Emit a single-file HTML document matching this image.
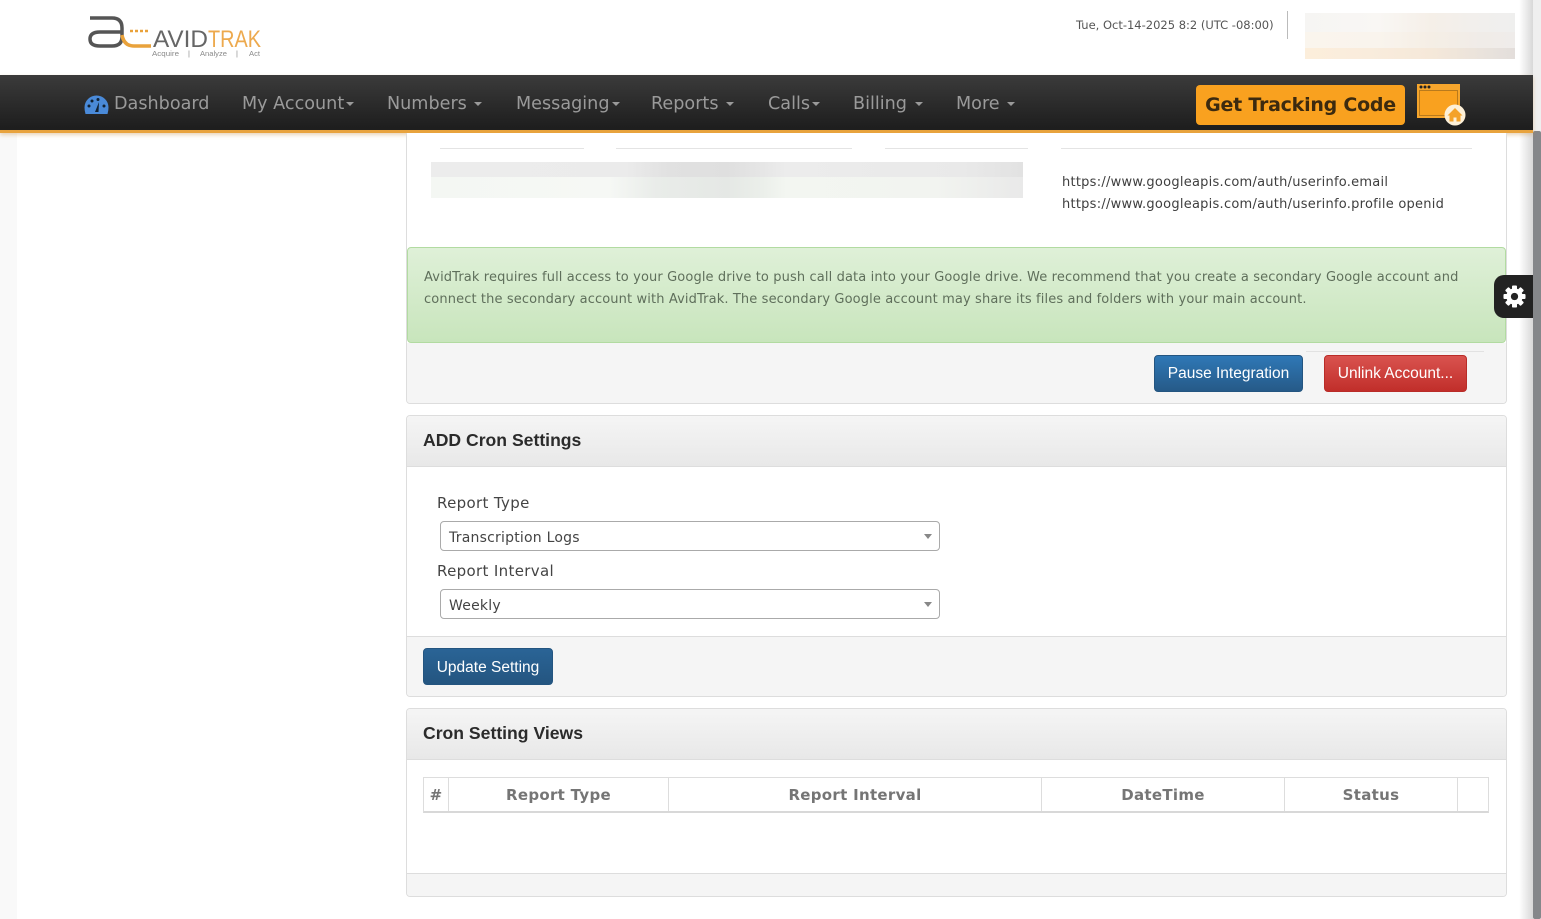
<!DOCTYPE html>
<html><head><meta charset="utf-8"><title>AvidTrak</title>
<style>
*{box-sizing:border-box}
html,body{margin:0;padding:0;width:1541px;height:919px;overflow:hidden;background:#fff}
body{position:relative;font-family:"DejaVu Sans","Liberation Sans",sans-serif;color:#555}
.a{position:absolute;white-space:nowrap}
.nav{font-size:17.6px;color:#9a9a9a;top:92px;line-height:24px}
.car{display:inline-block;width:0;height:0;border:4px solid transparent;border-top-color:#9a9a9a;border-bottom:0;vertical-align:middle;margin-left:2px}
.panel{position:absolute;left:406px;width:1101px;border:1px solid #ddd;border-radius:4px;background:#fff}
.head{position:absolute;left:0;right:0;top:0;height:51px;background:linear-gradient(#f5f5f5,#e8e8e8);border-bottom:1px solid #ddd;border-radius:3px 3px 0 0}
.title{position:absolute;left:16px;top:12px;font:bold 17.6px/24px "Liberation Sans",sans-serif;color:#2b2b2b}
.foot{position:absolute;left:0;right:0;bottom:0;background:#f5f5f5;border-top:1px solid #ddd;border-radius:0 0 3px 3px}
.btn{position:absolute;border-radius:4px;color:#fff;font:15.5px/36px "Liberation Sans",sans-serif;text-align:center}
.blue{background:linear-gradient(#2f78b6,#265a88);border:1px solid #245580}
.blue2{background:linear-gradient(#2a6496,#245580);border:1px solid #245580}
.red{background:linear-gradient(#d9534f,#c12e2a);border:1px solid #b92c28}
.sel{position:absolute;left:440px;width:500px;height:30px;border:1px solid #aaa;border-radius:4px;background:#fff;font-size:14px;line-height:32px;letter-spacing:.22px;color:#444;padding-left:8px}
.sel:after{content:"";position:absolute;right:7px;top:12px;border:4px solid transparent;border-top:5px solid #888;border-bottom:0}
.lab{font-size:15px;color:#444;left:437px;line-height:20px;letter-spacing:.34px}
.th{position:absolute;top:779px;height:33px;line-height:33px;text-align:center;font-size:15px;font-weight:bold;color:#757575;letter-spacing:.3px}
.vl{position:absolute;top:778px;width:1px;height:33px;background:#ddd}
.rule{position:absolute;top:148px;height:1px;background:#e4e4e4}
</style></head><body>

<div class="a" style="left:0;top:133px;width:17px;height:786px;background:#f9f9f9"></div>
<div class="a" style="left:1519px;top:0;width:14px;height:919px;background:linear-gradient(90deg,#fff,#d8d8d8)"></div>
<div class="a" style="left:1533px;top:0;width:8px;height:919px;background:#efefef"></div>
<div class="a" style="left:1533px;top:131px;width:8px;height:788px;background:#85878a;border-radius:2px"></div>

<!-- logo -->
<svg class="a" style="left:80px;top:8px" width="190" height="56" viewBox="80 8 190 56">
<path d="M90 18H112Q122 18 122 28V37Q122 46 112 46H100Q90 46 90 39Q90 32 100 32H122" fill="none" stroke="#555" stroke-width="3.500"/>
<path d="M122 35Q124 46 134 46H151" fill="none" stroke="#e9a23b" stroke-width="3.500"/>
<path d="M130 31h3M135 31h3M140 31h3M145 31h3" stroke="#e9a23b" stroke-width="2.500"/>
<text x="153" y="47" font-family="Liberation Sans" font-size="24" fill="#666" textLength="55" lengthAdjust="spacingAndGlyphs">AVID</text>
<text x="208" y="47" font-family="Liberation Sans" font-size="24" fill="#eda94d" textLength="53" lengthAdjust="spacingAndGlyphs">TRAK</text>
<g font-family="Liberation Sans" font-size="7.500" fill="#8a8a8a">
<text x="152" y="56" textLength="27" lengthAdjust="spacingAndGlyphs">Acquire</text>
<text x="188" y="56">|</text>
<text x="200" y="56" textLength="27" lengthAdjust="spacingAndGlyphs">Analyze</text>
<text x="236" y="56">|</text>
<text x="249" y="56" textLength="11" lengthAdjust="spacingAndGlyphs">Act</text>
</g>
</svg>

<div class="a" style="left:1076px;top:18px;font-size:11.5px;line-height:15px;color:#555">Tue, Oct-14-2025 8:2 (UTC -08:00)</div>
<div class="a" style="left:1287px;top:11px;width:1px;height:28px;background:#bbb"></div>
<div class="a" style="left:1305px;top:13px;width:210px;height:19px;background:linear-gradient(90deg,#f6f5f3,#f9f7f4 35%,#f5efe8 60%,#f1efed 85%,#efefee)"></div>
<div class="a" style="left:1305px;top:32px;width:210px;height:16px;background:linear-gradient(90deg,#faf5ed,#f9f4ed 35%,#f5eee5 60%,#f0ece8 85%,#efecea)"></div>
<div class="a" style="left:1305px;top:48px;width:210px;height:11px;background:linear-gradient(90deg,#fceedb,#f9ecdc 30%,#f5e8d9 60%,#e8e2dc 88%,#e3dedb)"></div>

<!-- nav -->
<div class="a" style="left:0;top:75px;width:1533px;height:58px;background:linear-gradient(#3b3b3b,#1e1e1e 96%);border-bottom:3px solid #e8a33d;box-shadow:0 2px 4px rgba(200,150,80,.4)"></div>
<svg class="a" style="left:84px;top:95px" width="25" height="20" viewBox="0 0 25 20">
<path d="M1.500 19Q0.500 15.500 0.500 12.500A12 12 0 0 1 24.500 12.500Q24.500 15.500 23.500 19Z" fill="#4a8ad8"/>
<circle cx="5" cy="11" r="1.500" fill="#123"/><circle cx="8" cy="6" r="1.500" fill="#123"/><circle cx="14" cy="4.500" r="1.500" fill="#123"/><circle cx="20" cy="11" r="1.500" fill="#123"/>
<path d="M11 17L15 7L14.500 17Z" fill="#123"/>
</svg>
<div class="a nav" style="left:114px">Dashboard</div>
<div class="a nav" style="left:242px">My Account<span class="car"></span></div>
<div class="a nav" style="left:387px">Numbers <span class="car"></span></div>
<div class="a nav" style="left:516px">Messaging<span class="car"></span></div>
<div class="a nav" style="left:651px">Reports <span class="car"></span></div>
<div class="a nav" style="left:768px">Calls<span class="car"></span></div>
<div class="a nav" style="left:853px">Billing <span class="car"></span></div>
<div class="a nav" style="left:956px">More <span class="car"></span></div>

<div class="a" style="left:1196px;top:85px;width:209px;height:40px;background:#f9a11f;border-radius:4px;color:#3c2a0f;font-weight:bold;font-size:19px;letter-spacing:-.24px;line-height:41px;text-align:center">Get Tracking Code</div>
<svg class="a" style="left:1414px;top:82px" width="54" height="44" viewBox="0 0 54 44">
<rect x="3" y="2" width="43" height="34" fill="#f6a52c"/>
<rect x="5.500" y="8.500" width="38" height="25" fill="#f9a11f" stroke="#b97a1c" stroke-width="1"/>
<circle cx="7" cy="5" r="1.500" fill="#222"/><circle cx="11" cy="5" r="1.500" fill="#222"/><circle cx="15" cy="5" r="1.500" fill="#222"/>
<circle cx="41" cy="33" r="10.500" fill="#fdf0d8"/>
<path d="M33.500 33.500L41 26L48.500 33.500H46.500V39.500H42.500V35.500H39.500V39.500H35.500V33.500Z" fill="#f4a22a"/>
</svg>

<!-- top panel -->
<div class="a" style="left:406px;top:133px;width:1101px;height:271px;border:1px solid #ddd;border-top:0;border-radius:0 0 4px 4px;background:#fff"></div>
<div class="a" style="left:407px;top:343px;width:1099px;height:60px;background:#f5f5f5;border-radius:0 0 3px 3px"></div>
<div class="rule" style="left:440px;width:144px"></div>
<div class="rule" style="left:616px;width:236px"></div>
<div class="rule" style="left:885px;width:143px"></div>
<div class="rule" style="left:1061px;width:411px"></div>
<div class="a" style="left:431px;top:162px;width:592px;height:15px;background:linear-gradient(90deg,#ececec,#ebebeb 33%,#e1e1e1 40%,#dfdfdf 50%,#e6e6e6 56%,#ececec 60%,#e9e9e9 90%,#e2e2e2)"></div>
<div class="a" style="left:431px;top:177px;width:592px;height:21px;background:linear-gradient(90deg,#f4f7f3,#f6f8f5 30%,#e9ece9 38%,#e5e8e5 50%,#ebefea 56%,#f3f6f1 60%,#f2f4f0 85%,#e9e9e9)"></div>
<div class="a" style="left:1062px;top:172px;font-size:13px;line-height:22px;color:#3e3e3e;letter-spacing:.25px">https://www.googleapis.com/auth/userinfo.email<br>https://www.googleapis.com/auth/userinfo.profile openid</div>

<div class="a" style="left:407px;top:247px;width:1099px;height:96px;background:linear-gradient(#dff0d8,#c8e5bc);border:1px solid #b2dba1;border-radius:4px"></div>
<div class="a" style="left:424px;top:267px;font-size:13px;line-height:22px;letter-spacing:.122px;color:#5f6f5b">AvidTrak requires full access to your Google drive to push call data into your Google drive. We recommend that you create a secondary Google account and<br>connect the secondary account with AvidTrak. The secondary Google account may share its files and folders with your main account.</div>
<div class="a" style="left:1306px;top:351px;width:178px;height:1px;background:#e2e2e2"></div>
<div class="btn blue" style="left:1154px;top:355px;width:149px;height:37px">Pause Integration</div>
<div class="btn red" style="left:1324px;top:355px;width:143px;height:37px">Unlink Account...</div>

<div class="a" style="left:1494px;top:275px;width:39px;height:43px;background:#222;border-radius:10px 0 0 10px"></div>
<svg class="a" style="left:1503px;top:285px" width="23" height="23" viewBox="-12 -12 24 24">
<g fill="#fff"><circle r="8.500"/><rect x="-2.600" y="-11.500" width="5.200" height="23" rx="1"/><rect x="-2.600" y="-11.500" width="5.200" height="23" rx="1" transform="rotate(45)"/><rect x="-2.600" y="-11.500" width="5.200" height="23" rx="1" transform="rotate(90)"/><rect x="-2.600" y="-11.500" width="5.200" height="23" rx="1" transform="rotate(135)"/></g>
<circle r="3.800" fill="#222"/>
</svg>

<!-- add cron -->
<div class="panel" style="top:415px;height:282px">
<div class="head"><div class="title">ADD Cron Settings</div></div>
<div class="foot" style="height:60px"></div>
</div>
<div class="a lab" style="top:493px">Report Type</div>
<div class="sel" style="top:521px">Transcription Logs</div>
<div class="a lab" style="top:561px">Report Interval</div>
<div class="sel" style="top:589px">Weekly</div>
<div class="btn blue2" style="left:423px;top:648px;width:130px;height:37px;line-height:38px">Update Setting</div>

<!-- views -->
<div class="panel" style="top:708px;height:189px">
<div class="head"><div class="title">Cron Setting Views</div></div>
<div class="foot" style="height:23px"></div>
</div>
<div class="a" style="left:423px;top:777px;width:1066px;height:36px;border:1px solid #ddd;border-bottom:2px solid #d8d8d8"></div>
<div class="vl" style="left:448px"></div>
<div class="vl" style="left:668px"></div>
<div class="vl" style="left:1041px"></div>
<div class="vl" style="left:1284px"></div>
<div class="vl" style="left:1457px"></div>
<div class="th" style="left:424px;width:24px">#</div>
<div class="th" style="left:449px;width:219px">Report Type</div>
<div class="th" style="left:669px;width:372px">Report Interval</div>
<div class="th" style="left:1042px;width:242px">DateTime</div>
<div class="th" style="left:1285px;width:172px">Status</div>
</body></html>
